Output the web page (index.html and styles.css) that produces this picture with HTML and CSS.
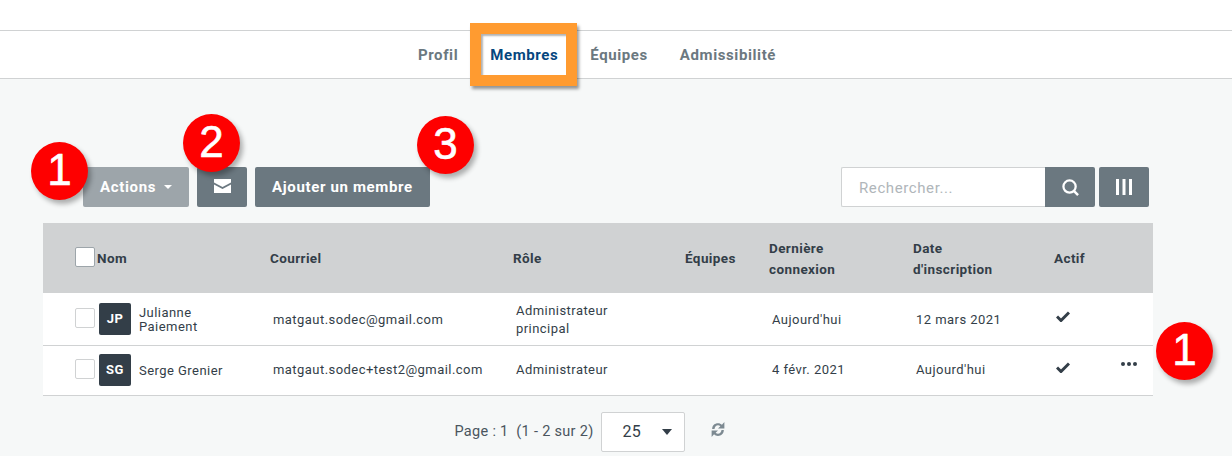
FILE: index.html
```html
<!DOCTYPE html>
<html lang="fr">

<head>
    <meta charset="UTF-8">
    <title>Membres</title>
    <link rel="stylesheet" href="styles.css">
</head>

<body>
    <div class="top-strip"></div>

    <nav class="tabs">
        <a class="tab">Profil</a>
        <a class="tab active">Membres</a>
        <a class="tab">Équipes</a>
        <a class="tab">Admissibilité</a>
    </nav>

    <main class="content">
        <div class="toolbar">
            <div class="toolbar-left">
                <button class="btn btn-muted">Actions <span class="caret"></span></button>
                <button class="btn btn-icon">
                    <svg class="mail" width="17" height="14" viewBox="0 0 17 14"><path d="M0 0h17v3.500L8.500 8 0 3.500z M0 5.500L8.500 10 17 5.500V14H0z" fill="#fff"/></svg>
                </button>
                <button class="btn">Ajouter un membre</button>
            </div>
            <div class="toolbar-right">
                <input class="search" type="text" placeholder="Rechercher...">
                <button class="btn btn-icon btn-search">
                    <svg width="17" height="17" viewBox="0 0 18 18"><circle cx="8" cy="8" r="6.500" fill="none" stroke="#fff" stroke-width="2.400"/><path d="M12.500 12.500L17 17" stroke="#fff" stroke-width="2.600"/></svg>
                </button>
                <button class="btn btn-icon">
                    <svg width="16" height="16" viewBox="0 0 16 16"><path d="M0 0h3v16H0z M6.500 0h3v16h-3z M13 0h3v16h-3z" fill="#fff"/></svg>
                </button>
            </div>
        </div>

        <table class="members">
            <thead>
                <tr>
                    <th class="col-name"><span class="name-head"><span class="checkbox head-check"></span>Nom</span></th>
                    <th class="col-mail">Courriel</th>
                    <th class="col-role">Rôle</th>
                    <th class="col-team">Équipes</th>
                    <th class="col-last">Dernière<br>connexion</th>
                    <th class="col-date">Date<br>d'inscription</th>
                    <th class="col-active">Actif</th>
                    <th></th>
                </tr>
            </thead>
            <tbody>
                <tr class="row-one">
                    <td>
                        <div class="person">
                            <span class="checkbox"></span>
                            <span class="avatar">JP</span>
                            <span class="person-name">Julianne<br>Paiement</span>
                        </div>
                    </td>
                    <td class="cell">matgaut.sodec@gmail.com</td>
                    <td class="cell">Administrateur<br>principal</td>
                    <td></td>
                    <td class="cell">Aujourd'hui</td>
                    <td class="cell">12 mars 2021</td>
                    <td class="cell">
                        <svg class="check" width="14" height="11" viewBox="0 0 14 11"><path d="M1 5.500l4 4L13 1.500" fill="none" stroke="#333e48" stroke-width="3"/></svg>
                    </td>
                    <td></td>
                </tr>
                <tr class="row-two">
                    <td>
                        <div class="person">
                            <span class="checkbox"></span>
                            <span class="avatar">SG</span>
                            <span class="person-name">Serge Grenier</span>
                        </div>
                    </td>
                    <td class="cell">matgaut.sodec+test2@gmail.com</td>
                    <td class="cell">Administrateur</td>
                    <td></td>
                    <td class="cell">4 févr. 2021</td>
                    <td class="cell">Aujourd'hui</td>
                    <td class="cell">
                        <svg class="check" width="14" height="11" viewBox="0 0 14 11"><path d="M1 5.500l4 4L13 1.500" fill="none" stroke="#333e48" stroke-width="3"/></svg>
                    </td>
                    <td><span class="dots"><i></i><i></i><i></i></span></td>
                </tr>
            </tbody>
        </table>

        <div class="pager">
            <span>Page : 1&nbsp; (1 - 2 sur 2)</span>
            <div class="page-size">25 <span class="caret caret-dark"></span></div>
            <svg class="refresh" width="16" height="17" viewBox="0 0 15 16">
                <path d="M2 7.500C2 4 4.500 2 7.500 2c1.500 0 2.800.5 3.700 1.500L13.500 1v6h-6l2.200-2.100C9.100 4.300 8.300 4 7.500 4 5.800 4 4.500 5.300 4.200 7.500z" fill="#7d8a92"/>
                <path d="M13 8.500c0 3.500-2.500 5.500-5.500 5.500-1.500 0-2.800-.5-3.700-1.500L1.500 15V9h6l-2.200 2.100c.6.6 1.400.9 2.200.9 1.700 0 3-1.300 3.300-3.500z" fill="#7d8a92"/>
            </svg>
        </div>
    </main>

    <!-- annotations on top of the screenshot -->
    <div class="highlight"></div>
    <span class="badge badge-a">1</span>
    <span class="badge badge-b">2</span>
    <span class="badge badge-c">3</span>
    <span class="badge badge-d">1</span>
</body>

</html>
```

FILE: styles.css
```css
html,
body {
    margin: 0;
    height: 456px;
    overflow: hidden;
}

body {
    font-family: "Roboto", "Liberation Sans", sans-serif;
    background: #f6f8f8;
    color: #333e48;
    font-size: 13px;
    position: relative;
}

.top-strip {
    height: 30px;
    background: #fff;
    border-bottom: 1px solid #d0d2d3;
}

.tabs {
    height: 47px;
    background: #fff;
    border-bottom: 1px solid #d0d2d3;
    display: flex;
    justify-content: center;
    align-items: center;
    gap: 32px;
    padding-right: 38px;
}

.tab {
    font-size: 15px;
    font-weight: 700;
    letter-spacing: 0.6px;
    color: #6b7880;
}

.tab.active {
    color: #05467e;
}

.content {
    padding: 88px 79px 0 43px;
}

.toolbar {
    display: flex;
    justify-content: space-between;
    padding: 0 4px 0 40px;
    margin-bottom: 16px;
}

.toolbar-left,
.toolbar-right {
    display: flex;
}

.toolbar-left {
    gap: 8px;
}

.btn {
    height: 40px;
    padding: 0 17px;
    border: none;
    border-radius: 2px;
    background: #6b7880;
    color: #fff;
    font-family: inherit;
    font-size: 15px;
    font-weight: 700;
    letter-spacing: 0.65px;
    display: flex;
    align-items: center;
}

.btn-muted {
    background: #9da5aa;
    width: 106px;
    gap: 8px;
}

.btn-icon {
    width: 50px;
    padding: 0;
    justify-content: center;
}

.mail {
    margin-top: -2px;
}

.btn-search {
    margin-right: 4px;
    border-radius: 0 2px 2px 0;
}

.search {
    width: 204px;
    height: 40px;
    box-sizing: border-box;
    padding: 1px 17px 0;
    border: 1px solid #d0d2d3;
    border-right: none;
    border-radius: 2px 0 0 2px;
    background: #fff;
    font-family: inherit;
    font-size: 15px;
    letter-spacing: 0.6px;
}

.search::placeholder {
    color: #b0b6ba;
}

.members {
    width: 1110px;
    border-collapse: collapse;
    table-layout: fixed;
    background: #fff;
}

.members th {
    height: 70px;
    padding: 1px 0 0;
    box-sizing: border-box;
    background: #d0d2d3;
    text-align: left;
    vertical-align: middle;
    font-size: 13.500px;
    font-weight: 700;
    line-height: 21px;
    letter-spacing: 0.4px;
    color: #333e48;
}

.col-name { width: 227px; }
.col-mail { width: 243px; }
.col-role { width: 172px; }
.col-team { width: 84px; }
.col-last { width: 144px; }
.col-date { width: 141px; }
.col-active { width: 66px; }

.name-head {
    display: flex;
    align-items: center;
    padding-left: 32px;
    gap: 2px;
}

.checkbox {
    display: block;
    width: 18px;
    height: 18px;
    flex: none;
    background: #fff;
    border: 1px solid #d0d2d3;
    border-radius: 2px;
}

.head-check {
    border-color: #9da5aa;
    position: relative;
    top: -2px;
}

.members td {
    padding: 0;
    box-sizing: border-box;
    border-bottom: 1px solid #d0d2d3;
    font-size: 13px;
    line-height: 18px;
    letter-spacing: 0.45px;
}

.row-one td {
    height: 52px;
}

.row-two td {
    height: 50px;
}

.members td.cell {
    padding-left: 3px;
}

.row-one td.cell {
    padding-top: 2px;
}

.person {
    display: flex;
    align-items: center;
    padding-left: 32px;
}

.person .checkbox {
    position: relative;
    top: -1px;
}

.avatar {
    width: 32px;
    height: 32px;
    margin: 0 8px 0 4px;
    flex: none;
    display: flex;
    align-items: center;
    justify-content: center;
    background: #333e48;
    border-radius: 2px;
    color: #fff;
    font-size: 13px;
    font-weight: 700;
}

.person-name {
    line-height: 14px;
    padding-top: 2px;
}

.check {
    display: block;
    margin-top: -6px;
    margin-left: -1px;
}

.dots {
    display: flex;
    gap: 2px;
    margin: -8px 0 0 1px;
}

.dots i {
    width: 4px;
    height: 4px;
    border-radius: 50%;
    background: #333e48;
}

.caret {
    display: inline-block;
    width: 0;
    height: 0;
    border-left: 4px solid transparent;
    border-right: 4px solid transparent;
    border-top: 4px solid #fff;
}

.caret-dark {
    border-left-width: 5px;
    border-right-width: 5px;
    border-top: 6px solid #333e48;
}

.pager {
    display: flex;
    align-items: center;
    justify-content: center;
    height: 40px;
    margin-top: 16px;
    padding-right: 15px;
    font-size: 14.500px;
    letter-spacing: 0.3px;
    color: #4a555e;
}

.page-size {
    width: 84px;
    height: 40px;
    box-sizing: border-box;
    margin: 0 25px 0 8px;
    padding: 0 12px 0 20px;
    display: flex;
    align-items: center;
    justify-content: space-between;
    background: #fff;
    border: 1px solid #d0d2d3;
    border-radius: 2px;
    font-size: 16px;
    color: #333e48;
}

.refresh {
    margin-top: -4px;
}

.highlight {
    position: absolute;
    left: 470px;
    top: 23px;
    width: 85px;
    height: 41px;
    border: 11px solid #ff9b30;
    box-shadow: 2px 3px 3px rgba(0, 0, 0, 0.4), inset 2px 2px 2px rgba(0, 0, 0, 0.3);
}

.badge {
    position: absolute;
    width: 57px;
    height: 58px;
    border-radius: 50%;
    background: #fe0000;
    color: #fff;
    font-family: "Liberation Sans", sans-serif;
    font-size: 44px;
    line-height: 56px;
    text-align: center;
    -webkit-text-stroke: 0.6px #fff;
    box-shadow: 3px 4px 5px rgba(0, 0, 0, 0.3);
}

.badge-a { left: 31px; top: 142px; }
.badge-b { left: 183px; top: 114px; }
.badge-c { left: 417px; top: 116px; }
.badge-d { left: 1156px; top: 322px; }
```
